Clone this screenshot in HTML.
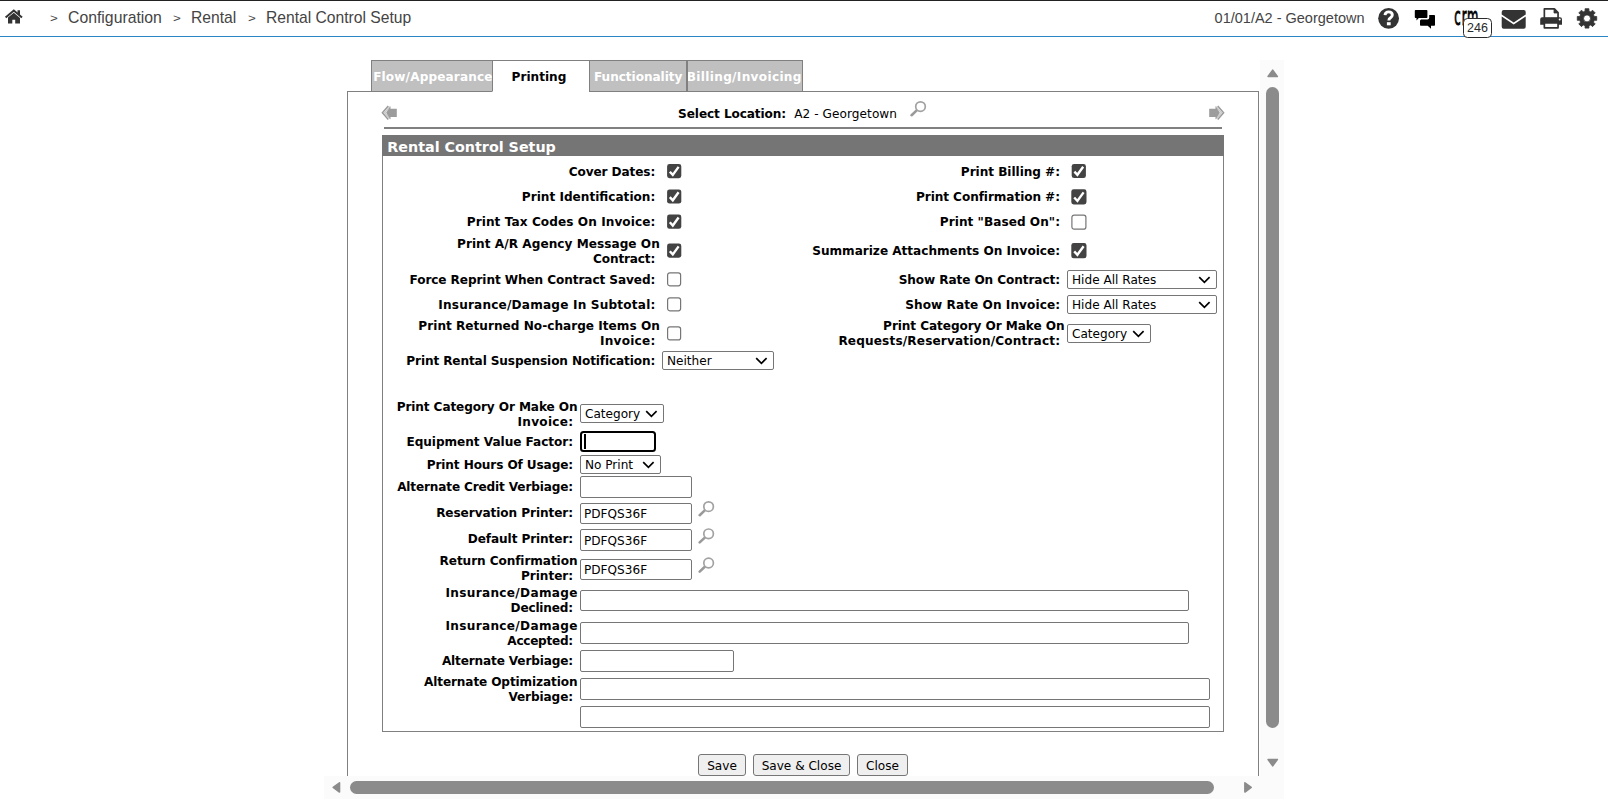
<!DOCTYPE html>
<html lang="en"><head><meta charset="utf-8"><title>Rental Control Setup</title>
<style>
html,body{margin:0;padding:0;background:#fff;}
body{width:1608px;height:811px;overflow:hidden;position:relative;font-family:"DejaVu Sans","Liberation Sans",sans-serif;font-size:12.1px;color:#000;}
.abs,.t,.l,.bx,.cb,.sel,.btn,.ln{position:absolute;}
.t{white-space:nowrap;line-height:15px;height:15px;}
.l{white-space:nowrap;line-height:15px;height:15px;font-weight:bold;text-align:right;}
.hd{font-family:"Liberation Sans",sans-serif;color:#444;white-space:nowrap;position:absolute;}
.bx{box-sizing:border-box;border:1px solid #767676;border-radius:2px;background:#fff;}
.cb{box-sizing:border-box;width:14.3px;height:14.3px;border-radius:2.4px;}
.cb.on{background:#434343;}
.cb.off{background:#fff;border:1px solid #767676;}
.cb svg{position:absolute;left:0;top:0;}
.sel{box-sizing:border-box;border:1px solid #767676;border-radius:2px;background:#fff;height:19px;line-height:19px;padding-left:4px;white-space:nowrap;}
.sel svg{position:absolute;right:5px;top:5px;}
.btn{box-sizing:border-box;border:1px solid #767676;border-radius:3px;background:#efefef;height:22px;line-height:22px;text-align:center;white-space:nowrap;}
.tab{position:absolute;box-sizing:border-box;top:60px;height:32px;border:1px solid #808080;background:#c0c0c0;color:#fff;font-weight:bold;line-height:30px;white-space:nowrap;overflow:hidden;}
</style></head>
<body>
<div class="abs" style="left:0;top:0;width:1608px;height:1px;background:#222"></div>
<div class="abs" style="left:0;top:36px;width:1608px;height:1px;background:#2b86c8"></div>
<svg class="abs" style="left:0;top:0" width="30" height="30" viewBox="0 0 30 30"><path d="M5.600 17.500 L13.800 10.500 L22 17.500" fill="none" stroke="#333" stroke-width="2"/><path d="M17.5 10.3h2.5v5.2l-2.5-2.1z" fill="#333"/><path d="M8 17.6 L13.8 12.7 L20 17.9 V23.6 H15.2 V19.7 H12.3 V23.6 H8z" fill="#333"/></svg>
<div class="hd" style="left:49.9px;top:7.300000000000001px;font-size:15.5px;line-height:20px;color:#444;transform:scale(0.86,0.76);transform-origin:0 15px;">&gt;</div>
<div class="hd" style="left:68.0px;top:7px;font-size:16.4px;line-height:20px;color:#444;transform:scale(0.963,1);transform-origin:0 15px;">Configuration</div>
<div class="hd" style="left:172.9px;top:7.300000000000001px;font-size:15.5px;line-height:20px;color:#444;transform:scale(0.86,0.76);transform-origin:0 15px;">&gt;</div>
<div class="hd" style="left:191.2px;top:7px;font-size:16.4px;line-height:20px;color:#444;transform:scale(0.955,1);transform-origin:0 15px;">Rental</div>
<div class="hd" style="left:248px;top:7.300000000000001px;font-size:15.5px;line-height:20px;color:#444;transform:scale(0.86,0.76);transform-origin:0 15px;">&gt;</div>
<div class="hd" style="left:266.2px;top:7px;font-size:16.4px;line-height:20px;color:#444;transform:scale(0.954,1);transform-origin:0 15px;">Rental Control Setup</div>
<div class="hd" style="left:1214.6px;top:8px;font-size:14.5px;line-height:20px;color:#444;">01/01/A2 - Georgetown</div>
<svg class="abs" style="left:1376px;top:6px" width="26" height="26" viewBox="0 0 26 26"><circle cx="12.6" cy="12.3" r="10.4" fill="#333"/><path d="M9 9.200c0.200-2.100 1.700-3.300 3.700-3.300s3.600 1.200 3.600 3.100c0 1.400-0.800 2.100-1.800 2.800-1.100 0.700-1.700 1.200-1.700 2.700" fill="none" stroke="#fff" stroke-width="2.900"/><rect x="10.900" y="16.200" width="3.800" height="3.100" fill="#fff"/></svg>
<svg class="abs" style="left:1412px;top:6px" width="28" height="26" viewBox="0 0 28 26"><path d="M3.600 4h11a.8.8 0 0 1 .8.800v6.400a.8.8 0 0 1-.8.800h-7.800l-2.300 2.600v-2.600h-.9a.8.8 0 0 1-.8-.8v-6.400a.8.8 0 0 1 .8-.8z" fill="#000"/><path d="M17.200 9h5a.8.8 0 0 1 .8.800v9.100a.8.8 0 0 1-.8.800h-3.200v3l-3.300-3h-6.900a.8.8 0 0 1-.8-.8v-4.300l1-1.200h6.600a1.600 1.600 0 0 0 1.600-1.600z" fill="#000"/></svg>
<div class="abs" style="left:1454.3px;top:5.2px;font-family:'DejaVu Sans Condensed','DejaVu Sans',sans-serif;font-weight:normal;font-size:13px;line-height:13px;color:#000;-webkit-text-stroke:0.45px #000;letter-spacing:0.9px;transform:scale(1.0,1.85);transform-origin:0 0;white-space:nowrap">crm</div>
<div class="abs" style="left:1463px;top:18px;width:29px;height:20px;box-sizing:border-box;border:1.3px solid #2a2a2a;border-radius:4.5px;background:#fff;font-family:'Liberation Sans',sans-serif;font-size:12.5px;line-height:19.4px;text-align:center;color:#2a2a2a">246</div>
<svg class="abs" style="left:1500px;top:8px" width="28" height="22" viewBox="0 0 28 22"><path d="M3.700 2h20a2 2 0 0 1 2 2v2.500l-12 8-12-8v-2.500a2 2 0 0 1 2-2z" fill="#333"/><path d="M1.700 8.500l12 8 12-8v10.200a2 2 0 0 1-2 2h-20a2 2 0 0 1-2-2z" fill="#333"/></svg>
<svg class="abs" style="left:1538px;top:6px" width="28" height="26" viewBox="0 0 28 26"><path d="M6.350 12.500V2.950H16.400L20.050 6.600V12.500Z" fill="#fff" stroke="#333" stroke-width="1.700" stroke-linejoin="round"/><path d="M16 3.200V7H19.800Z" fill="#333" stroke="#333" stroke-width="0.800" stroke-linejoin="round"/><path d="M4.200 11.300h17.800a2 2 0 0 1 2 2v5.400h-21.800v-5.400a2 2 0 0 1 2-2z" fill="#333"/><rect x="6.350" y="17" width="13.700" height="4.850" fill="#fff" stroke="#333" stroke-width="1.700" stroke-linejoin="round"/><circle cx="21.700" cy="13.500" r="1" fill="#fff"/></svg>
<svg class="abs" style="left:1574px;top:6px" width="26" height="26" viewBox="0 0 26 26"><path d="M11.08 5.15 L11.07 2.69 L14.93 2.69 L14.92 5.15 L16.77 5.91 L18.50 4.17 L21.23 6.90 L19.49 8.63 L20.25 10.48 L22.71 10.47 L22.71 14.33 L20.25 14.32 L19.49 16.17 L21.23 17.90 L18.50 20.63 L16.77 18.89 L14.92 19.65 L14.93 22.11 L11.07 22.11 L11.08 19.65 L9.23 18.89 L7.50 20.63 L4.77 17.90 L6.51 16.17 L5.75 14.32 L3.29 14.33 L3.29 10.47 L5.75 10.48 L6.51 8.63 L4.77 6.90 L7.50 4.17 L9.23 5.91Z M9.50 12.40 a3.5 3.5 0 1 0 7.0 0 a3.5 3.5 0 1 0 -7.0 0Z" fill="#333" fill-rule="evenodd" stroke="#333" stroke-width="0.8" stroke-linejoin="round"/></svg>
<div class="abs" style="left:324px;top:776px;width:960px;height:23px;background:#fbfbfb"></div>
<div class="abs" style="left:1260px;top:60px;width:24px;height:739px;background:#fbfbfb"></div>
<div class="abs" style="left:347px;top:91px;width:912px;height:685px;box-sizing:border-box;border:1px solid #808080;border-bottom:none;background:#fff"></div>
<div class="abs" style="left:1266px;top:87px;width:13px;height:641px;border-radius:6.5px;background:#8b8b8b"></div>
<div class="abs" style="left:350px;top:781px;width:864px;height:13px;border-radius:6.5px;background:#8b8b8b"></div>
<svg class="abs" style="left:1262px;top:64px" width="22" height="18" viewBox="0 0 22 18"><path d="M10.700 6.200 L15.300 12.500 H6.100Z" fill="#8b8b8b" stroke="#8b8b8b" stroke-width="1.600" stroke-linejoin="round"/></svg>
<svg class="abs" style="left:1262px;top:752px" width="22" height="18" viewBox="0 0 22 18"><path d="M10.700 13.800 L15.300 7.500 H6.100Z" fill="#8b8b8b" stroke="#8b8b8b" stroke-width="1.600" stroke-linejoin="round"/></svg>
<svg class="abs" style="left:328px;top:777px" width="18" height="22" viewBox="0 0 18 22"><path d="M5.200 10.400 L11.500 5.800 V15Z" fill="#8b8b8b" stroke="#8b8b8b" stroke-width="1.600" stroke-linejoin="round"/></svg>
<svg class="abs" style="left:1238px;top:777px" width="18" height="22" viewBox="0 0 18 22"><path d="M13.200 10.400 L6.900 5.800 V15Z" fill="#8b8b8b" stroke="#8b8b8b" stroke-width="1.600" stroke-linejoin="round"/></svg>
<div class="tab" style="left:371px;width:122px;letter-spacing:0.13px;text-align:left;text-indent:1.2px;line-height:32px;">Flow/Appearance</div>
<div class="tab" style="left:492px;width:98px;letter-spacing:0px;text-align:left;text-indent:18.6px;line-height:32px;background:#fff;color:#000;border-bottom:1px solid #fff;">Printing</div>
<div class="tab" style="left:589px;width:98px;letter-spacing:-0.05px;text-align:left;text-indent:4px;line-height:32px;">Functionality</div>
<div class="tab" style="left:687px;width:116px;letter-spacing:0.32px;text-align:left;text-indent:-1.2px;line-height:32px;">Billing/Invoicing</div>
<svg class="abs" style="left:380px;top:104px" width="20" height="18" viewBox="0 0 20 18"><path d="M8.300 2 L2.400 8.700 L8.300 15.400" fill="none" stroke="#9a9a9a" stroke-width="1.500"/><path d="M9.800 2.600 L4.500 8.700 L9.800 14.800" fill="none" stroke="#c8c8c8" stroke-width="1.400"/><path d="M6.100 8.700 L10.500 2.100 V4.700 H16.800 V12.900 H10.500 V15.400Z" fill="#9c9c9c"/></svg>
<svg class="abs" style="left:1206px;top:104px" width="20" height="18" viewBox="0 0 20 18"><path d="M11.700 2 L17.600 8.700 L11.700 15.400" fill="none" stroke="#9a9a9a" stroke-width="1.500"/><path d="M10.200 2.600 L15.500 8.700 L10.200 14.800" fill="none" stroke="#c8c8c8" stroke-width="1.400"/><path d="M13.900 8.700 L9.500 2.100 V4.700 H3.200 V12.900 H9.500 V15.400Z" fill="#9c9c9c"/></svg>
<div class="t" style="left:678.1px;top:107px;font-weight:bold;letter-spacing:-0.09px">Select Location:</div>
<div class="t" style="left:794.2px;top:107px;letter-spacing:0.07px">A2 - Georgetown</div>
<svg class="abs" style="left:910px;top:100px" width="19" height="19" viewBox="0.00 0.00 19 19"><path d="M6.700 10.400 L1.600 15.200" stroke="#9a9a9a" stroke-width="2.600" stroke-linecap="round"/><circle cx="10.500" cy="6.600" r="4.800" fill="#fff" stroke="#a2a2a2" stroke-width="1.700"/></svg>
<div class="abs" style="left:384px;top:127px;width:838px;height:2px;background:#808080"></div>
<div class="abs" style="left:382px;top:135px;width:842px;height:597px;box-sizing:border-box;border:1px solid #808080"></div>
<div class="abs" style="left:382px;top:135px;width:842px;height:21px;background:#757575"></div>
<div class="t" style="left:387.3px;top:140px;font-size:14.3px;font-weight:bold;color:#fff">Rental Control Setup</div>
<div class="l" style="right:952.79px;top:165px;letter-spacing:-0.090px">Cover Dates:</div>
<svg class="abs" style="left:666px;top:163px" width="18" height="18" viewBox="0 0 18 18"><rect x="1.10" y="1.00" width="14.2" height="14.2" rx="2.4" fill="#434343"/><path d="M3.80 8.70 L6.80 11.90 L12.60 3.90" fill="none" stroke="#fff" stroke-width="2.400"/></svg>
<div class="l" style="right:952.70px;top:190px">Print Identification:</div>
<svg class="abs" style="left:666px;top:188px" width="18" height="18" viewBox="0 0 18 18"><rect x="1.10" y="1.40" width="14.2" height="14.2" rx="2.4" fill="#434343"/><path d="M3.80 9.10 L6.80 12.30 L12.60 4.30" fill="none" stroke="#fff" stroke-width="2.400"/></svg>
<div class="l" style="right:952.63px;top:215px;letter-spacing:0.073px">Print Tax Codes On Invoice:</div>
<svg class="abs" style="left:666px;top:213px" width="18" height="18" viewBox="0 0 18 18"><rect x="1.10" y="1.60" width="14.2" height="14.2" rx="2.4" fill="#434343"/><path d="M3.80 9.30 L6.80 12.50 L12.60 4.50" fill="none" stroke="#fff" stroke-width="2.400"/></svg>
<div class="l" style="right:948.16px;top:237px;letter-spacing:0.040px">Print A/R Agency Message On</div>
<div class="l" style="right:952.86px;top:252px;letter-spacing:-0.160px">Contract:</div>
<svg class="abs" style="left:666px;top:242px" width="18" height="18" viewBox="0 0 18 18"><rect x="1.10" y="1.50" width="14.2" height="14.2" rx="2.4" fill="#434343"/><path d="M3.80 9.20 L6.80 12.40 L12.60 4.40" fill="none" stroke="#fff" stroke-width="2.400"/></svg>
<div class="l" style="right:952.79px;top:273px;letter-spacing:-0.090px">Force Reprint When Contract Saved:</div>
<svg class="abs" style="left:666px;top:271px" width="18" height="18" viewBox="0 0 18 18"><rect x="1.60" y="1.80" width="13.00" height="13.00" rx="2.200" fill="#fff" stroke="#767676" stroke-width="1.200"/></svg>
<div class="l" style="right:952.51px;top:298px;letter-spacing:0.186px">Insurance/Damage In Subtotal:</div>
<svg class="abs" style="left:666px;top:296px" width="18" height="18" viewBox="0 0 18 18"><rect x="1.60" y="1.80" width="13.00" height="13.00" rx="2.200" fill="#fff" stroke="#767676" stroke-width="1.200"/></svg>
<div class="l" style="right:948.18px;top:319px;letter-spacing:0.016px">Print Returned No-charge Items On</div>
<div class="l" style="right:952.45px;top:334px;letter-spacing:0.247px">Invoice:</div>
<svg class="abs" style="left:666px;top:325px" width="18" height="18" viewBox="0 0 18 18"><rect x="1.60" y="1.90" width="13.00" height="13.00" rx="2.200" fill="#fff" stroke="#767676" stroke-width="1.200"/></svg>
<div class="l" style="right:952.82px;top:354px;letter-spacing:-0.117px">Print Rental Suspension Notification:</div>
<div class="sel" style="left:662px;top:351px;width:112px">Neither<svg width="13" height="8" viewBox="0 0 13 8"><path d="M1.200 1.200 L6.400 6.300 L11.600 1.200" fill="none" stroke="#000" stroke-width="1.700"/></svg></div>
<div class="l" style="right:548.04px;top:165px;letter-spacing:-0.045px">Print Billing #:</div>
<svg class="abs" style="left:1070px;top:162px" width="18" height="18" viewBox="0 0 18 18"><rect x="1.70" y="1.90" width="14.2" height="14.2" rx="2.4" fill="#434343"/><path d="M4.40 9.60 L7.40 12.80 L13.20 4.80" fill="none" stroke="#fff" stroke-width="2.400"/></svg>
<div class="l" style="right:548.08px;top:190px;letter-spacing:-0.077px">Print Confirmation #:</div>
<svg class="abs" style="left:1070px;top:188px" width="18" height="18" viewBox="0 0 18 18"><rect x="1.30" y="1.30" width="15.2" height="15.2" rx="2.4" fill="#434343"/><path d="M4.19 9.54 L7.40 12.97 L13.61 4.40" fill="none" stroke="#fff" stroke-width="2.400"/></svg>
<div class="l" style="right:547.96px;top:215px;letter-spacing:0.042px">Print &quot;Based On&quot;:</div>
<svg class="abs" style="left:1070px;top:213px" width="18" height="18" viewBox="0 0 18 18"><rect x="1.90" y="2.10" width="14.00" height="14.00" rx="2.200" fill="#fff" stroke="#767676" stroke-width="1.200"/></svg>
<div class="l" style="right:548.02px;top:244px;letter-spacing:-0.022px">Summarize Attachments On Invoice:</div>
<svg class="abs" style="left:1070px;top:242px" width="18" height="18" viewBox="0 0 18 18"><rect x="1.30" y="1.10" width="15.2" height="15.2" rx="2.4" fill="#434343"/><path d="M4.19 9.34 L7.40 12.77 L13.61 4.20" fill="none" stroke="#fff" stroke-width="2.400"/></svg>
<div class="l" style="right:548.09px;top:273px;letter-spacing:-0.090px">Show Rate On Contract:</div>
<div class="sel" style="left:1067px;top:270px;width:150px">Hide All Rates<svg width="13" height="8" viewBox="0 0 13 8"><path d="M1.200 1.200 L6.400 6.300 L11.600 1.200" fill="none" stroke="#000" stroke-width="1.700"/></svg></div>
<div class="l" style="right:547.93px;top:298px;letter-spacing:0.069px">Show Rate On Invoice:</div>
<div class="sel" style="left:1067px;top:295px;width:150px">Hide All Rates<svg width="13" height="8" viewBox="0 0 13 8"><path d="M1.200 1.200 L6.400 6.300 L11.600 1.200" fill="none" stroke="#000" stroke-width="1.700"/></svg></div>
<div class="l" style="right:543.58px;top:319px;letter-spacing:-0.079px">Print Category Or Make On</div>
<div class="l" style="right:547.85px;top:334px;letter-spacing:0.150px">Requests/Reservation/Contract:</div>
<div class="sel" style="left:1067px;top:324px;width:84px">Category<svg width="13" height="8" viewBox="0 0 13 8"><path d="M1.200 1.200 L6.400 6.300 L11.600 1.200" fill="none" stroke="#000" stroke-width="1.700"/></svg></div>
<div class="l" style="right:1030.60px;top:400px;letter-spacing:-0.101px">Print Category Or Make On</div>
<div class="l" style="right:1034.63px;top:415px;letter-spacing:0.270px">Invoice:</div>
<div class="sel" style="left:580px;top:404px;width:84px">Category<svg width="13" height="8" viewBox="0 0 13 8"><path d="M1.200 1.200 L6.400 6.300 L11.600 1.200" fill="none" stroke="#000" stroke-width="1.700"/></svg></div>
<div class="l" style="right:1034.94px;top:435px;letter-spacing:-0.039px">Equipment Value Factor:</div>
<div class="abs" style="left:580px;top:431px;width:76px;height:21px;box-sizing:border-box;border:2px solid #000;border-radius:3.5px;background:#fff"></div>
<div class="abs" style="left:584px;top:434px;width:2px;height:15px;background:#000"></div>
<div class="l" style="right:1035.01px;top:458px;letter-spacing:-0.112px">Print Hours Of Usage:</div>
<div class="sel" style="left:580px;top:455px;width:81px">No Print<svg width="13" height="8" viewBox="0 0 13 8"><path d="M1.200 1.200 L6.400 6.300 L11.600 1.200" fill="none" stroke="#000" stroke-width="1.700"/></svg></div>
<div class="l" style="right:1035.05px;top:480px;letter-spacing:-0.152px">Alternate Credit Verbiage:</div>
<div class="bx" style="left:580px;top:476px;width:112px;height:22px;line-height:22px;padding-left:3px"></div>
<div class="l" style="right:1034.97px;top:506px;letter-spacing:-0.072px">Reservation Printer:</div>
<div class="bx" style="left:580px;top:503px;width:112px;height:21px;line-height:21px;padding-left:3px">PDFQS36F</div>
<svg class="abs" style="left:698px;top:500px" width="19" height="19" viewBox="-0.10 -0.00 19 19"><path d="M6.700 10.400 L1.600 15.200" stroke="#9a9a9a" stroke-width="2.600" stroke-linecap="round"/><circle cx="10.500" cy="6.600" r="4.800" fill="#fff" stroke="#a2a2a2" stroke-width="1.700"/></svg>
<div class="l" style="right:1035.00px;top:532px;letter-spacing:-0.101px">Default Printer:</div>
<div class="bx" style="left:580px;top:529px;width:112px;height:22px;line-height:22px;padding-left:3px">PDFQS36F</div>
<svg class="abs" style="left:698px;top:527px" width="19" height="19" viewBox="-0.10 -0.20 19 19"><path d="M6.700 10.400 L1.600 15.200" stroke="#9a9a9a" stroke-width="2.600" stroke-linecap="round"/><circle cx="10.500" cy="6.600" r="4.800" fill="#fff" stroke="#a2a2a2" stroke-width="1.700"/></svg>
<div class="l" style="right:1030.59px;top:554px;letter-spacing:-0.085px">Return Confirmation</div>
<div class="l" style="right:1034.92px;top:569px;letter-spacing:-0.022px">Printer:</div>
<div class="bx" style="left:580px;top:559px;width:112px;height:21px;line-height:21px;padding-left:3px">PDFQS36F</div>
<svg class="abs" style="left:698px;top:556px" width="19" height="19" viewBox="-0.10 -0.40 19 19"><path d="M6.700 10.400 L1.600 15.200" stroke="#9a9a9a" stroke-width="2.600" stroke-linecap="round"/><circle cx="10.500" cy="6.600" r="4.800" fill="#fff" stroke="#a2a2a2" stroke-width="1.700"/></svg>
<div class="l" style="right:1030.18px;top:586px;letter-spacing:0.315px">Insurance/Damage</div>
<div class="l" style="right:1035.08px;top:601px;letter-spacing:-0.180px">Declined:</div>
<div class="bx" style="left:580px;top:590px;width:609px;height:21px;line-height:21px;padding-left:3px"></div>
<div class="l" style="right:1030.18px;top:619px;letter-spacing:0.315px">Insurance/Damage</div>
<div class="l" style="right:1035.18px;top:634px;letter-spacing:-0.280px">Accepted:</div>
<div class="bx" style="left:580px;top:622px;width:609px;height:22px;line-height:22px;padding-left:3px"></div>
<div class="l" style="right:1035.05px;top:654px;letter-spacing:-0.152px">Alternate Verbiage:</div>
<div class="bx" style="left:580px;top:650px;width:154px;height:22px;line-height:22px;padding-left:3px"></div>
<div class="l" style="right:1030.62px;top:675px;letter-spacing:-0.123px">Alternate Optimization</div>
<div class="l" style="right:1035.00px;top:690px;letter-spacing:-0.100px">Verbiage:</div>
<div class="bx" style="left:580px;top:678px;width:630px;height:22px;line-height:22px;padding-left:3px"></div>
<div class="bx" style="left:580px;top:706px;width:630px;height:22px;line-height:22px;padding-left:3px"></div>
<div class="btn" style="left:698px;top:754px;width:48px">Save</div>
<div class="btn" style="left:753px;top:754px;width:97px">Save &amp; Close</div>
<div class="btn" style="left:857px;top:754px;width:51px">Close</div>
</body></html>
